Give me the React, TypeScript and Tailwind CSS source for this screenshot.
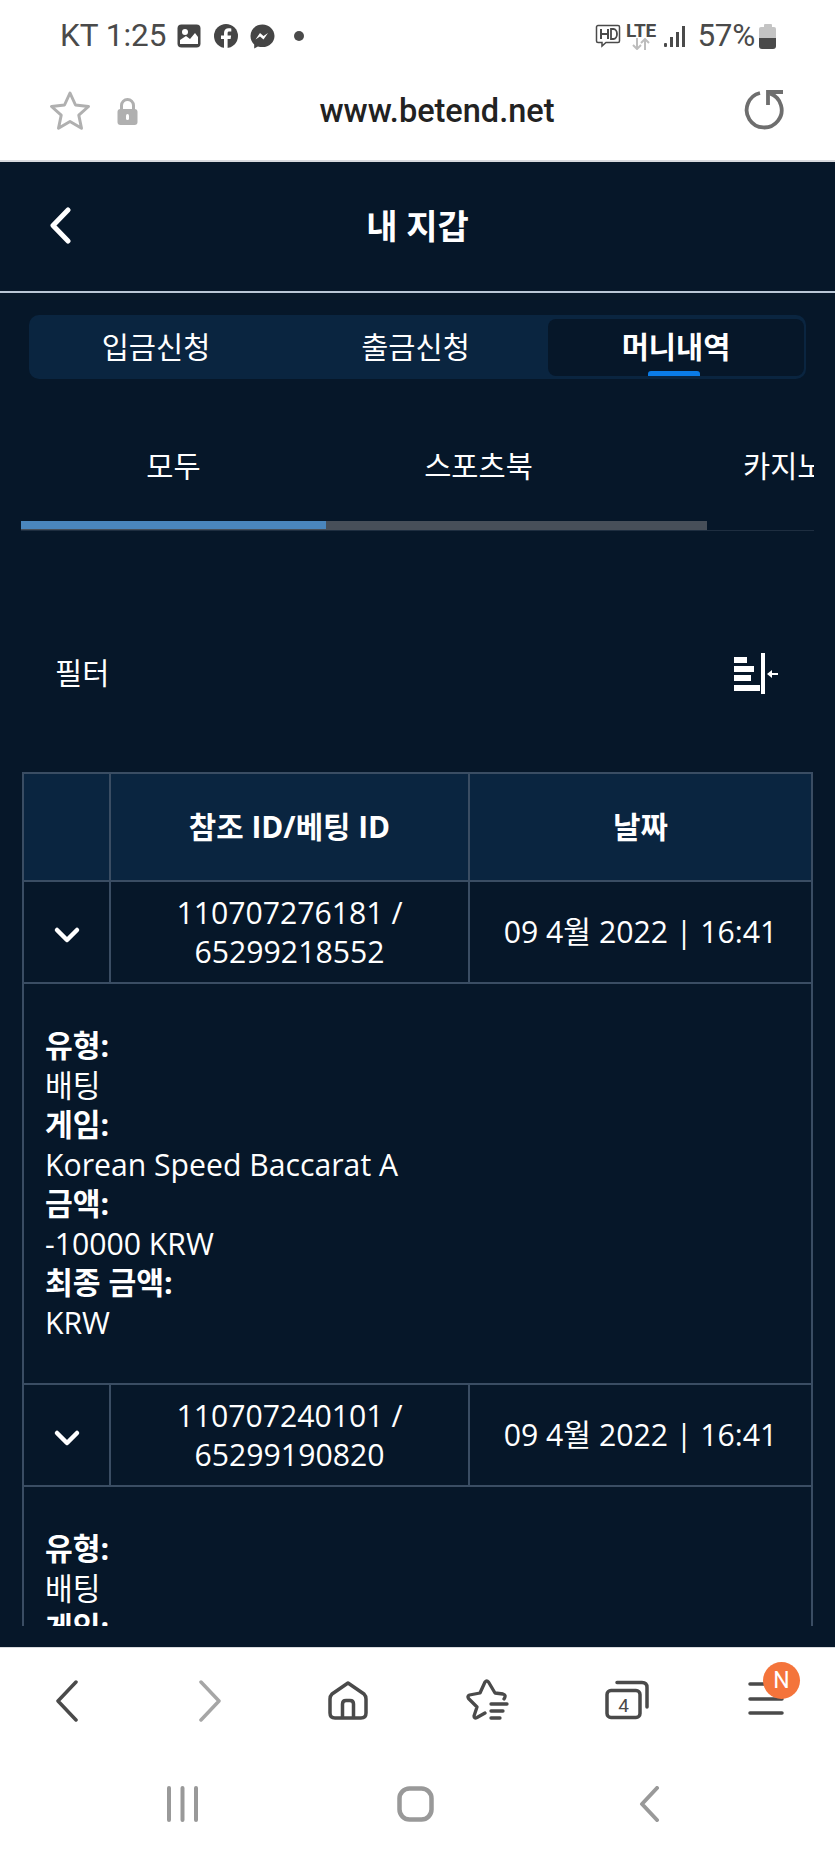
import React from "react";

const KR = "font-['Open_Sans','Noto_Sans_CJK_KR',sans-serif]";

function StatusBar() {
  return (
    <div className="h-[68px] bg-white flex items-center pl-[60px] pr-[59px] pt-[4px] text-[#4a4a4a] font-['Roboto',sans-serif]">
      <span className="text-[31.5px] leading-[36px] whitespace-nowrap">KT 1:25</span>
      <svg className="ml-[10px]" width="24" height="24" viewBox="0 0 24 24">
        <rect x="0.5" y="0.5" width="23" height="23" rx="4" fill="#454545" />
        <circle cx="8" cy="8" r="3" fill="#fff" />
        <path d="M3 20v-4l6-4 4 3 5-6 3 4v7z" fill="#fff" />
      </svg>
      <svg className="ml-[13px]" width="24" height="24" viewBox="0 0 24 24">
        <circle cx="12" cy="12" r="12" fill="#454545" />
        <path d="M13.600 24v-9h3l.5-3.600h-3.500V9.300c0-1 .4-1.700 1.800-1.700h1.900V4.400c-.4 0-1.400-.2-2.700-.2-2.800 0-4.600 1.700-4.600 4.700v2.500H7v3.600h3V24z" fill="#fff" />
      </svg>
      <svg className="ml-[12px]" width="25" height="25" viewBox="0 0 25 25">
        <path d="M12.500 0.500C5.700 0.500.5 5.400.5 12c0 3.400 1.400 6.400 3.700 8.500v4l3.700-2c1.400.4 3 .6 4.600.6 6.800 0 12-4.900 12-11.100S19.300.5 12.500.5z" fill="#454545" />
        <path d="M5.500 15.500l4.500-6.500 3.500 3 4.500-3-4.500 6.500-3.500-3z" fill="#fff" />
      </svg>
      <span className="ml-[19px] w-[10px] h-[10px] rounded-full bg-[#4a4a4a]" />
      <div className="flex-1" />
      <svg width="26" height="24" viewBox="0 0 26 24" fill="none" stroke="#4a4a4a">
        <path d="M3 1.500h20a1.500 1.500 0 0 1 1.500 1.500v14a1.500 1.500 0 0 1-1.500 1.500H11l-4 3.500v-3.500H3A1.500 1.500 0 0 1 1.500 17V3A1.500 1.500 0 0 1 3 1.500z" strokeWidth="1.500" />
        <path d="M6 5v10M13 5v10M6 10h7" strokeWidth="2" />
        <path d="M16 5v10h2.500a3.500 5 0 0 0 0-10z" strokeWidth="1.800" />
      </svg>
      <div className="ml-[4px] flex flex-col items-center w-[31px]">
        <span className="text-[19px] leading-[15px] font-bold tracking-[-0.3px]">LTE</span>
        <svg width="20" height="12" viewBox="0 0 20 12" fill="none" stroke="#bdbdbd" strokeWidth="2">
          <path d="M6 0v11M2 7l4 4 4-4" />
          <path d="M14 12V1M10 5l4-4 4 4" />
        </svg>
      </div>
      <svg className="ml-[8px]" width="21" height="23" viewBox="0 0 21 23" fill="#4a4a4a">
        <rect x="0" y="18" width="3" height="4" rx="1" />
        <rect x="6" y="12" width="3" height="10" />
        <rect x="12" y="7" width="3" height="15" />
        <rect x="18" y="1" width="3" height="21" />
      </svg>
      <span className="ml-[12px] text-[31.5px] leading-[36px] tracking-[-0.3px]">57%</span>
      <div className="ml-[4px] w-[17px] h-[25px] flex flex-col items-center">
        <div className="w-[8px] h-[3px] bg-[#c4c4c4] rounded-t-[1px]" />
        <div className="w-[17px] h-[11px] bg-[#c4c4c4] rounded-t-[2px]" />
        <div className="w-[17px] h-[11px] bg-[#4a4a4a] rounded-b-[3px]" />
      </div>
    </div>
  );
}

function UrlBar() {
  return (
    <div className="h-[94px] bg-white border-b-2 border-[#d8dade] flex items-center pl-[49px] pr-[49px] pb-[6px]">
      <svg width="42" height="42" viewBox="0 0 42 42" fill="none" stroke="#b0b0b0" strokeWidth="3" strokeLinejoin="round">
        <path d="M21 3l5.500 12 13 1.500-9.700 8.700 2.700 13L21 31.500 9.500 38.200l2.700-13L2.500 16.500l13-1.500z" />
      </svg>
      <svg className="ml-[26px]" width="21" height="27" viewBox="0 0 21 27">
        <path d="M4.500 12V7.500a6 6 0 0 1 12 0V12" fill="none" stroke="#b0b0b0" strokeWidth="3" />
        <rect x="0.500" y="11" width="20" height="16" rx="3" fill="#b0b0b0" />
        <rect x="9" y="16" width="3" height="6" rx="1.500" fill="#fff" />
      </svg>
      <div className="flex-1 text-center pr-[8px] text-[32.5px] leading-[38px] font-medium text-[#222] font-['Roboto',sans-serif]">www.betend.net</div>
      <svg width="42" height="42" viewBox="0 0 42 42" fill="none" stroke="#6e6e6e" strokeWidth="3.800">
        <path d="M16 3A17.500 17.500 0 1 0 26 3.500" />
        <path d="M39 2H24V15" />
      </svg>
    </div>
  );
}

function Header() {
  return (
    <div className="relative h-[131px] border-b-2 border-[#b9c6d6] flex items-center justify-center">
      <svg className="absolute left-[49px] top-[45px]" width="23" height="37" viewBox="0 0 23 37" fill="none" stroke="#fff" strokeWidth="5" strokeLinecap="round" strokeLinejoin="round">
        <path d="M19 3L4 18.500 19 34" />
      </svg>
      <span className="text-[34px] leading-[40px] font-bold text-white pb-[2px]">내 지갑</span>
    </div>
  );
}

function TopTabs() {
  return (
    <div className="mx-[29px] mt-[22px] h-[64px] rounded-[10px] bg-[#0a2540] flex items-center pr-[2px] text-[29.5px] text-white">
      <div className="w-[254px] text-center">입금신청</div>
      <div className="w-[265px] text-center">출금신청</div>
      <div className="relative flex-1 h-[57px] rounded-[8px] bg-[#061729] flex items-center justify-center font-bold">
        머니내역
        <span className="absolute left-[100px] bottom-0 w-[52px] h-[5px] rounded-t-[3px] bg-[#0a7ce8]" />
      </div>
    </div>
  );
}

function SubTabs() {
  return (
    <div className="relative mx-[21px] mt-[65px] h-[87px] overflow-hidden text-[29.5px] text-white border-b border-[#1e2e40] whitespace-nowrap">
      <div className="flex h-[44px] items-center">
        <div className="w-[305px] shrink-0 text-center">모두</div>
        <div className="w-[305px] shrink-0 text-center">스포츠북</div>
        <div className="w-[305px] shrink-0 pl-[112px]">카지노</div>
      </div>
      <div className="absolute left-0 bottom-0 w-[686px] h-[9px] bg-[#474f59]">
        <div className="w-[305px] h-[8px] bg-[#4a86bd]" />
      </div>
    </div>
  );
}

function FilterRow() {
  return (
    <div className="mx-[55px] mt-[119px] h-[50px] flex items-center justify-between text-[29.5px] text-white">
      <span className="pb-[3px]">필터</span>
      <svg width="45" height="42" viewBox="0 0 45 42" fill="#fff" className="mr-[1px] mb-[2px]">
        <rect x="0" y="4" width="13" height="6" />
        <rect x="0" y="13" width="20" height="6" />
        <rect x="0" y="22" width="17" height="6" />
        <rect x="0" y="32" width="26" height="6" />
        <rect x="27" y="0" width="4" height="41" />
        <rect x="35" y="20" width="9" height="2" />
        <path d="M33 21l5-4v8z" />
      </svg>
    </div>
  );
}

const cell = "border-2 border-[#3a4d63]";

function DataRow({ id1, id2, date }: { id1: string; id2: string; date: string }) {
  return (
    <>
      <tr className="h-[102px]">
        <td className={cell + " text-center align-middle"}>
          <svg className="inline-block" width="28" height="20" viewBox="0 0 28 20" fill="none" stroke="#fff" strokeWidth="4.500" strokeLinecap="round" strokeLinejoin="round">
            <path d="M4 5l10 10L24 5" />
          </svg>
        </td>
        <td className={cell + " text-center align-middle leading-[39px]"}>
          {id1} /<br />
          {id2}
        </td>
        <td className={cell + " text-center align-middle whitespace-nowrap"}>{date}</td>
      </tr>
      <tr>
        <td colSpan={3} className={cell + " pl-[21px] pr-[21px] pt-[42px] pb-[41px] leading-[39.5px]"}>
          <div className="font-bold">유형:</div>
          <div>배팅</div>
          <div className="font-bold">게임:</div>
          <div>Korean Speed Baccarat A</div>
          <div className="font-bold">금액:</div>
          <div>-10000 KRW</div>
          <div className="font-bold">최종 금액:</div>
          <div>KRW</div>
        </td>
      </tr>
    </>
  );
}

function HistoryTable() {
  return (
    <div className="mx-[22px] mt-[72px] h-[854px] overflow-hidden">
      <table className="w-[789px] table-fixed border-collapse text-[30.2px] text-white">
        <colgroup>
          <col className="w-[87px]" />
          <col className="w-[359px]" />
          <col className="w-[343px]" />
        </colgroup>
        <thead>
          <tr className="h-[108px] bg-[#0a2540] font-bold text-[29.8px]">
            <th className={cell} />
            <th className={cell}>참조 ID/베팅 ID</th>
            <th className={cell}>날짜</th>
          </tr>
        </thead>
        <tbody>
          <DataRow id1="110707276181" id2="65299218552" date="09 4월 2022 | 16:41" />
          <DataRow id1="110707240101" id2="65299190820" date="09 4월 2022 | 16:41" />
        </tbody>
      </table>
    </div>
  );
}

function BrowserNav() {
  const s = "#4a4a4a";
  return (
    <div className="h-[104px] bg-white border-t border-[#d8dade] flex items-start relative">
      <svg className="ml-[55px] mt-[32px]" width="24" height="42" viewBox="0 0 24 42" fill="none" stroke={s} strokeWidth="3.500" strokeLinecap="round" strokeLinejoin="round">
        <path d="M21 2L3 21l18 19" />
      </svg>
      <svg className="ml-[119px] mt-[32px]" width="24" height="42" viewBox="0 0 24 42" fill="none" stroke="#a6a6a6" strokeWidth="3.500" strokeLinecap="round" strokeLinejoin="round">
        <path d="M3 2l18 19L3 40" />
      </svg>
      <svg className="ml-[106px] mt-[32px]" width="40" height="40" viewBox="0 0 40 40" fill="none" stroke={s} strokeWidth="3.500" strokeLinejoin="round">
        <path d="M20 3L36 14Q38 16 38 19V33Q38 38 33 38H7Q2 38 2 33V19Q2 16 4 14Z" />
        <path d="M14.500 38V24Q14.500 20.500 18 20.500H22Q25.500 20.500 25.500 24V38" />
      </svg>
      <svg className="ml-[98px] mt-[31px]" width="44" height="42" viewBox="0 0 44 42" fill="none" stroke={s} strokeWidth="3.300" strokeLinecap="round" strokeLinejoin="round">
        <path d="M38 20C40 17 39 15.500 37 15L29 14L22.500 3Q20.700 1 19 3L14 14L3.500 16Q1 17 2.500 19.500L11 28L8 37Q8 40 11 38.500L19 34" />
        <path d="M25 25H41M25 32H37M25 39H34" />
      </svg>
      <svg className="ml-[94px] mt-[32px]" width="46" height="40" viewBox="0 0 46 40" fill="none" stroke={s} strokeLinejoin="round">
        <rect x="3" y="10.500" width="33" height="27" rx="4" strokeWidth="3.500" />
        <path d="M13 2.500H38Q43 2.500 43 7.500V27" strokeWidth="3.500" strokeLinecap="round" />
        <text x="19.500" y="31.500" textAnchor="middle" fontSize="19" fontFamily="Roboto, sans-serif" fill={s} stroke="none">4</text>
      </svg>
      <svg className="ml-[98px] mt-[33px]" width="36" height="35" viewBox="0 0 36 35" fill="none" stroke={s} strokeWidth="3.500" strokeLinecap="round">
        <path d="M2 3h32M2 18h32M2 32h32" />
      </svg>
      <div className="absolute left-[763px] top-[14px] w-[37px] h-[37px] rounded-full bg-[#f4743b] text-[#fff] text-[23px] leading-[37px] text-center font-['Roboto',sans-serif]">N</div>
    </div>
  );
}

function SystemNav() {
  return (
    <div className="flex-1 bg-white flex items-start relative">
      <svg className="ml-[166px] mt-[35px]" width="33" height="36" viewBox="0 0 33 36" fill="none" stroke="#999" strokeWidth="4" strokeLinecap="round">
        <path d="M3 2v32M16.500 2v32M30 2v32" />
      </svg>
      <svg className="ml-[198px] mt-[35px]" width="37" height="36" viewBox="0 0 37 36" fill="none" stroke="#999" strokeWidth="4.500">
        <rect x="2.500" y="2.500" width="32" height="31" rx="10" />
      </svg>
      <svg className="ml-[205px] mt-[35px]" width="21" height="36" viewBox="0 0 21 36" fill="none" stroke="#999" strokeWidth="4" strokeLinecap="round" strokeLinejoin="round">
        <path d="M18 2L3 18l15 16" />
      </svg>
    </div>
  );
}

export default function App() {
  return (
    <div className={"w-[835px] h-[1856px] flex flex-col overflow-hidden bg-white " + KR}>
      <StatusBar />
      <UrlBar />
      <div className="h-[1485px] bg-[#061729] overflow-hidden">
        <Header />
        <TopTabs />
        <SubTabs />
        <FilterRow />
        <HistoryTable />
      </div>
      <BrowserNav />
      <SystemNav />
    </div>
  );
}
